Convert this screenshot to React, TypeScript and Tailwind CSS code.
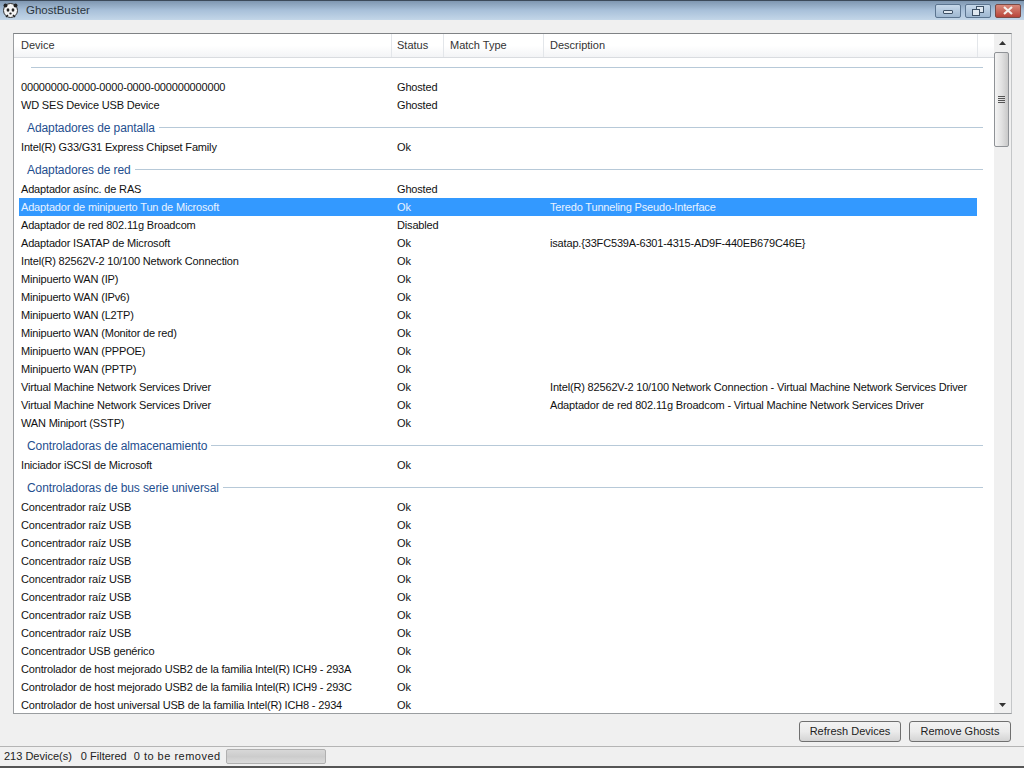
const font = { fontFamily: '"Liberation Sans", Arial, sans-serif' };

type R = { g?: string; d?: string; s?: string; x?: string; sel?: boolean };

const usb = "Concentrador raíz USB";
const rows: R[] = [
  { d: "00000000-0000-0000-0000-000000000000", s: "Ghosted" },
  { d: "WD SES Device USB Device", s: "Ghosted" },
  { g: "Adaptadores de pantalla" },
  { d: "Intel(R) G33/G31 Express Chipset Family", s: "Ok" },
  { g: "Adaptadores de red" },
  { d: "Adaptador asínc. de RAS", s: "Ghosted" },
  { d: "Adaptador de minipuerto Tun de Microsoft", s: "Ok", x: "Teredo Tunneling Pseudo-Interface", sel: true },
  { d: "Adaptador de red 802.11g Broadcom", s: "Disabled" },
  { d: "Adaptador ISATAP de Microsoft", s: "Ok", x: "isatap.{33FC539A-6301-4315-AD9F-440EB679C46E}" },
  { d: "Intel(R) 82562V-2 10/100 Network Connection", s: "Ok" },
  { d: "Minipuerto WAN (IP)", s: "Ok" },
  { d: "Minipuerto WAN (IPv6)", s: "Ok" },
  { d: "Minipuerto WAN (L2TP)", s: "Ok" },
  { d: "Minipuerto WAN (Monitor de red)", s: "Ok" },
  { d: "Minipuerto WAN (PPPOE)", s: "Ok" },
  { d: "Minipuerto WAN (PPTP)", s: "Ok" },
  { d: "Virtual Machine Network Services Driver", s: "Ok", x: "Intel(R) 82562V-2 10/100 Network Connection - Virtual Machine Network Services Driver" },
  { d: "Virtual Machine Network Services Driver", s: "Ok", x: "Adaptador de red 802.11g Broadcom - Virtual Machine Network Services Driver" },
  { d: "WAN Miniport (SSTP)", s: "Ok" },
  { g: "Controladoras de almacenamiento" },
  { d: "Iniciador iSCSI de Microsoft", s: "Ok" },
  { g: "Controladoras de bus serie universal" },
  { d: usb, s: "Ok" },
  { d: usb, s: "Ok" },
  { d: usb, s: "Ok" },
  { d: usb, s: "Ok" },
  { d: usb, s: "Ok" },
  { d: usb, s: "Ok" },
  { d: usb, s: "Ok" },
  { d: usb, s: "Ok" },
  { d: "Concentrador USB genérico", s: "Ok" },
  { d: "Controlador de host mejorado USB2 de la familia Intel(R) ICH9 - 293A", s: "Ok" },
  { d: "Controlador de host mejorado USB2 de la familia Intel(R) ICH9 - 293C", s: "Ok" },
  { d: "Controlador de host universal USB de la familia Intel(R) ICH8 - 2934", s: "Ok" },
];

function Row({ r }: { r: R }) {
  if (r.g) {
    return (
      <div className="flex h-[24px] items-center pt-[2px] pl-[13px] pr-[11px] gap-[4px]">
        <span className="text-[12px] text-[#1f4f8f] whitespace-nowrap tracking-[-0.1px] pt-[1px]">{r.g}</span>
        <div className="flex-1 h-px bg-[#b7c9d8]" />
      </div>
    );
  }
  return (
    <div className={`flex h-[18px] w-[958px] ml-[5px] items-center text-[11px] leading-[18px] tracking-[-0.17px] whitespace-nowrap ${r.sel ? "bg-[#3399ff] text-[#e8f2ff]" : "text-[#111]"}`}>
      <div className="w-[376px] pl-[2px] overflow-hidden">{r.d}</div>
      <div className="w-[153px] pl-[2px]">{r.s}</div>
      <div className="flex-1 overflow-hidden pl-[2px]">{r.x}</div>
    </div>
  );
}

function HeaderCell({ w, t }: { w: string; t?: string }) {
  return (
    <div className={`${w} h-full flex items-center text-[11px] text-[#333] border-r border-[#e3e6ea]`}>{t}</div>
  );
}

function Panda() {
  return (
    <svg width="17" height="17" viewBox="0 0 17 17" className="ml-[2px]">
      <circle cx="8.5" cy="8.5" r="7" fill="#f4f4f4" stroke="#333" strokeWidth="1" />
      <circle cx="3.5" cy="3.5" r="2" fill="#222" />
      <circle cx="13.5" cy="3.5" r="2" fill="#222" />
      <ellipse cx="6" cy="8" rx="1.4" ry="1.8" fill="#222" />
      <ellipse cx="11" cy="8" rx="1.4" ry="1.8" fill="#222" />
      <ellipse cx="8.5" cy="11.5" rx="1.2" ry="0.9" fill="#222" />
      <path d="M4 15l2-2M13 15l-2-2" stroke="#222" strokeWidth="1.5" />
    </svg>
  );
}

export default function App() {
  return (
    <div style={font} className="w-[1024px] h-[768px] overflow-hidden flex flex-col bg-[#f0f0f0] text-black">
      {/* title bar */}
      <div className="h-[20px] shrink-0 flex items-center bg-gradient-to-b from-[#7f97b1] via-[#a9c1da] to-[#c3d6e8] border-t border-[#3c4a5a]">
        <Panda />
        <span className="ml-[7px] text-[11.5px] text-[#2b3640]">GhostBuster</span>
        <div className="ml-auto flex gap-[4px] pr-[3px] items-center">
          <div className="w-[26px] h-[14px] rounded-[2px] border border-[#5c7590] bg-gradient-to-b from-[#c6d8ea] to-[#9fb8d1] flex items-center justify-center">
            <div className="w-[10px] h-[4px] mt-[2px] bg-[#dfe8f0] border border-[#3d5065] rounded-[1px]" />
          </div>
          <div className="w-[26px] h-[14px] rounded-[2px] border border-[#5c7590] bg-gradient-to-b from-[#c6d8ea] to-[#9fb8d1] flex items-center justify-center">
            <svg width="12" height="10" viewBox="0 0 12 10">
              <rect x="4.5" y="0.5" width="7" height="6" fill="#dfe8f0" stroke="#3d5065" />
              <rect x="0.5" y="3.5" width="7" height="6" fill="#dfe8f0" stroke="#3d5065" />
            </svg>
          </div>
          <div className="w-[26px] h-[14px] rounded-[2px] border border-[#7a4a45] bg-gradient-to-b from-[#d98a7c] to-[#b8443a] flex items-center justify-center">
            <svg width="12" height="9" viewBox="0 0 12 9">
              <path d="M2 1l8 7M10 1l-8 7" stroke="#f5f0ec" strokeWidth="2.2" />
            </svg>
          </div>
        </div>
      </div>

      {/* list */}
      <div className="flex-1 min-h-0 flex flex-col pt-[13px] pl-[13px] pr-[12px]">
        <div className="flex-1 min-h-0 flex border border-t-[#7f8285] border-l-[#9a9da0] border-r-[#c4c6c8] border-b-[#9a9da0] bg-white">
          <div className="flex-1 min-w-0 flex flex-col overflow-hidden">
            <div className="h-[24px] shrink-0 flex bg-gradient-to-b from-white from-50% to-[#f3f4f6] border-b border-[#d9dce0]">
              <HeaderCell w="w-[378px] pl-[7px]" t="Device" />
              <HeaderCell w="w-[52px] pl-[5px]" t="Status" />
              <HeaderCell w="w-[100px] pl-[6px]" t="Match Type" />
              <HeaderCell w="w-[434px] pl-[6px]" t="Description" />
            </div>
            <div className="flex-1 min-h-0 overflow-hidden">
              <div className="h-[20px] flex items-center pb-[2px] pl-[17px] pr-[11px]">
                <div className="flex-1 h-px bg-[#b7c9d8]" />
              </div>
              {rows.map((r, i) => <Row key={i} r={r} />)}
            </div>
          </div>
          {/* scrollbar */}
          <div className="w-[17px] shrink-0 flex flex-col bg-[#f0f0f0]">
            <div className="h-[18px] flex items-center justify-center">
              <svg width="7" height="4" viewBox="0 0 7 4"><path d="M3.5 0L7 4H0z" fill="#333" /></svg>
            </div>
            <div className="h-[95px] mr-[2px] rounded-[2px] border border-[#8f9296] bg-gradient-to-r from-[#f4f4f4] via-[#e2e2e2] to-[#c9c9c9] flex flex-col items-center justify-center gap-[1px]">
              <div className="w-[7px] h-px bg-[#555]" />
              <div className="w-[7px] h-px bg-[#555]" />
              <div className="w-[7px] h-px bg-[#555]" />
              <div className="w-[7px] h-px bg-[#555]" />
            </div>
            <div className="flex-1" />
            <div className="h-[17px] flex items-center justify-center">
              <svg width="7" height="4" viewBox="0 0 7 4"><path d="M0 0h7L3.5 4z" fill="#333" /></svg>
            </div>
          </div>
        </div>

        {/* buttons */}
        <div className="h-[32px] shrink-0 flex justify-end items-center gap-[8px] pt-[3px] pr-[1px]">
          {["Refresh Devices", "Remove Ghosts"].map((t) => (
            <div key={t} className="w-[102px] h-[21px] rounded-[3px] border border-[#707070] bg-gradient-to-b from-[#f3f3f3] via-[#ebebeb] to-[#d4d4d4] flex items-center justify-center text-[11px] text-[#222]">
              {t}
            </div>
          ))}
        </div>
      </div>

      {/* status bar */}
      <div className="h-[22px] shrink-0 flex items-center border-t border-[#b5b5b5] border-b-2 border-b-[#555] pl-[4px] text-[11px] text-[#222] whitespace-nowrap">
        <span>213 Device(s)</span>
        <span className="ml-[9px]">0 Filtered</span>
        <span className="ml-[7px] tracking-[0.5px]">0 to be removed</span>
        <div className="ml-[5px] w-[100px] h-[15px] rounded-[2px] border border-[#b0b0b0] bg-gradient-to-b from-[#d8d8d8] via-[#cccccc] to-[#dcdcdc]" />
      </div>
    </div>
  );
}
